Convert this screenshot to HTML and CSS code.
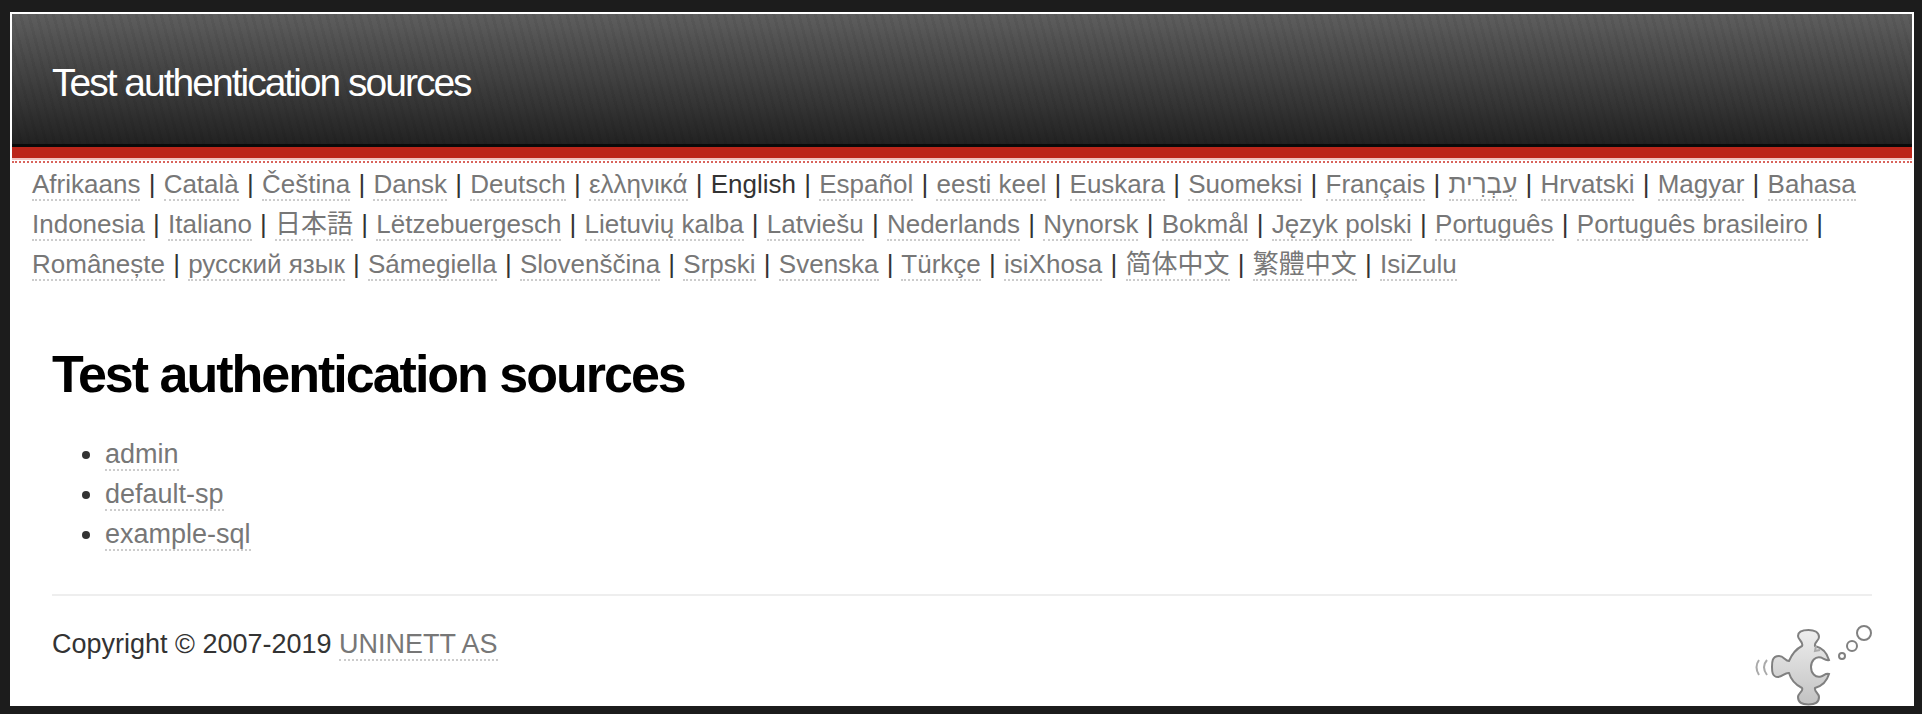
FILE: index.html
```html
<!DOCTYPE html>
<html lang="en">
<head>
<meta charset="utf-8">
<title>Test authentication sources</title>
<link rel="stylesheet" href="styles.css">
</head>
<body>
<div class="wrap">
  <header class="header">
    <a class="header-title" href="#">Test authentication sources</a>
  </header>
  <nav class="languages" aria-label="Language">
    <a href="#">Afrikaans</a> <span class="sep">|</span> <a href="#">Català</a> <span class="sep">|</span> <a href="#">Čeština</a> <span class="sep">|</span> <a href="#">Dansk</a> <span class="sep">|</span> <a href="#">Deutsch</a> <span class="sep">|</span> <a href="#">ελληνικά</a> <span class="sep">|</span> <span>English</span> <span class="sep">|</span> <a href="#">Español</a> <span class="sep">|</span> <a href="#">eesti keel</a> <span class="sep">|</span> <a href="#">Euskara</a> <span class="sep">|</span> <a href="#">Suomeksi</a> <span class="sep">|</span> <a href="#">Français</a> <span class="sep">|</span> <a href="#" lang="he">עִבְרִית</a> <span class="sep">|</span> <a href="#">Hrvatski</a> <span class="sep">|</span> <a href="#">Magyar</a> <span class="sep">|</span> <a href="#">Bahasa Indonesia</a> <span class="sep">|</span> <a href="#">Italiano</a> <span class="sep">|</span> <a href="#" lang="ja">日本語</a> <span class="sep">|</span> <a href="#">Lëtzebuergesch</a> <span class="sep">|</span> <a href="#">Lietuvių kalba</a> <span class="sep">|</span> <a href="#">Latviešu</a> <span class="sep">|</span> <a href="#">Nederlands</a> <span class="sep">|</span> <a href="#">Nynorsk</a> <span class="sep">|</span> <a href="#">Bokmål</a> <span class="sep">|</span> <a href="#">Język polski</a> <span class="sep">|</span> <a href="#">Português</a> <span class="sep">|</span> <a href="#">Português brasileiro</a> <span class="sep">|</span> <a href="#">Românește</a> <span class="sep">|</span> <a href="#">русский язык</a> <span class="sep">|</span> <a href="#">Sámegiella</a> <span class="sep">|</span> <a href="#">Slovenščina</a> <span class="sep">|</span> <a href="#">Srpski</a> <span class="sep">|</span> <a href="#">Svenska</a> <span class="sep">|</span> <a href="#">Türkçe</a> <span class="sep">|</span> <a href="#">isiXhosa</a> <span class="sep">|</span> <a href="#" lang="zh-Hans">简体中文</a> <span class="sep">|</span> <a href="#" lang="zh-Hant">繁體中文</a> <span class="sep">|</span> <a href="#">IsiZulu</a>
  </nav>
  <main class="content">
    <h1 class="title">Test authentication sources</h1>
    <ul class="sources">
      <li><a href="#">admin</a></li>
      <li><a href="#">default-sp</a></li>
      <li><a href="#">example-sql</a></li>
    </ul>
    <footer class="footer">
      <p class="copyright">Copyright © 2007-2019 <a href="#">UNINETT AS</a></p>
      <svg class="logo" width="118" height="82" viewBox="0 0 118 82" fill="none" stroke="#808080" stroke-width="2" aria-hidden="true">
        <defs>
          <linearGradient id="piece" x1="0" y1="0" x2="0" y2="1">
            <stop offset="0" stop-color="#eeeeee"/>
            <stop offset="1" stop-color="#c2c2c2"/>
          </linearGradient>
        </defs>
        <path d="M5 36Q0 43 5 51M13 36Q7 43 13 51" stroke="#aaa"/>
        <path fill="url(#piece)" d="M35 37C38 30 42 25 48 22C50 18 44 16 44 12C44 7 49 6 54.500 6C60 6 65 8 65 13C65 17 60 18 61 22C69 24 73 29 75 36C72 37 69 34 67 33.500C61 32 57 37 57 43C57 49 61 54 67 52.500C70 52 71 49 75 50C73 57 68 62 61 64C60 68 65 69 65 73C65 79 60 80.500 54.500 80.500C49 80.500 44 79 44 73C44 69 50 67 48 64C42 61 37 56 35 49C31 48 29 53 24 53C18 53 18 47 18 43C18 38 18 32 25 32C30 32 31 37 35 37Z"/>
        <path d="M62 22L61 27L66 26" stroke="#aaa"/>
        <circle cx="88" cy="32" r="3"/>
        <circle cx="98" cy="22" r="5"/>
        <circle cx="110" cy="9" r="7"/>
      </svg>
    </footer>
  </main>
</div>
</body>
</html>
```
FILE: styles.css
```css
* {
  box-sizing: border-box;
}

body {
  margin: 0;
  padding: 12px 8px 8px 10px;
  background: #1c1c1c;
  color: #333;
  font: 26px/40px "Liberation Sans", Arial, "Noto Sans CJK JP", sans-serif;
}

a {
  color: #777;
  text-decoration: none;
  border-bottom: 2px dotted #ccc;
}

:lang(zh-Hans) {
  font-family: "Liberation Sans", Arial, "Noto Sans CJK SC", sans-serif;
}

:lang(zh-Hant) {
  font-family: "Liberation Sans", Arial, "Noto Sans CJK TC", sans-serif;
}

.wrap {
  background: #fff;
  border: 2px solid #fff;
  border-bottom: 0;
}

.header {
  padding: 48px 40px 41px;
  border-bottom: 3px solid #0a0a0a;
  background:
    repeating-linear-gradient(75deg, rgba(0, 0, 0, 0.05) 0 3px, transparent 3px 8px),
    linear-gradient(#5e5e5e, #222);
  box-shadow: 0 11px #bc261a, 0 13px #f0c4c0;
}

.header-title {
  display: block;
  border: 0;
  color: #fff;
  font-size: 39px;
  line-height: 41px;
  letter-spacing: -2px;
}

.languages {
  margin-top: 14px;
  padding: 1px 20px 0;
  border-top: 2px dotted #d9645c;
}

.sep {
  margin: 0 1px;
}

.content {
  padding: 0 40px;
  font-size: 27px;
}

.title {
  margin: 60px 0 30px;
  color: #000;
  font-size: 52px;
  line-height: 60px;
  letter-spacing: -2px;
}

.sources {
  margin: 0;
  padding-left: 53px;
}

.footer {
  display: flex;
  justify-content: space-between;
  margin-top: 40px;
  padding-top: 28px;
  border-top: 2px solid #eee;
}

.copyright {
  margin: 0;
}

.logo {
  flex: none;
}
```
